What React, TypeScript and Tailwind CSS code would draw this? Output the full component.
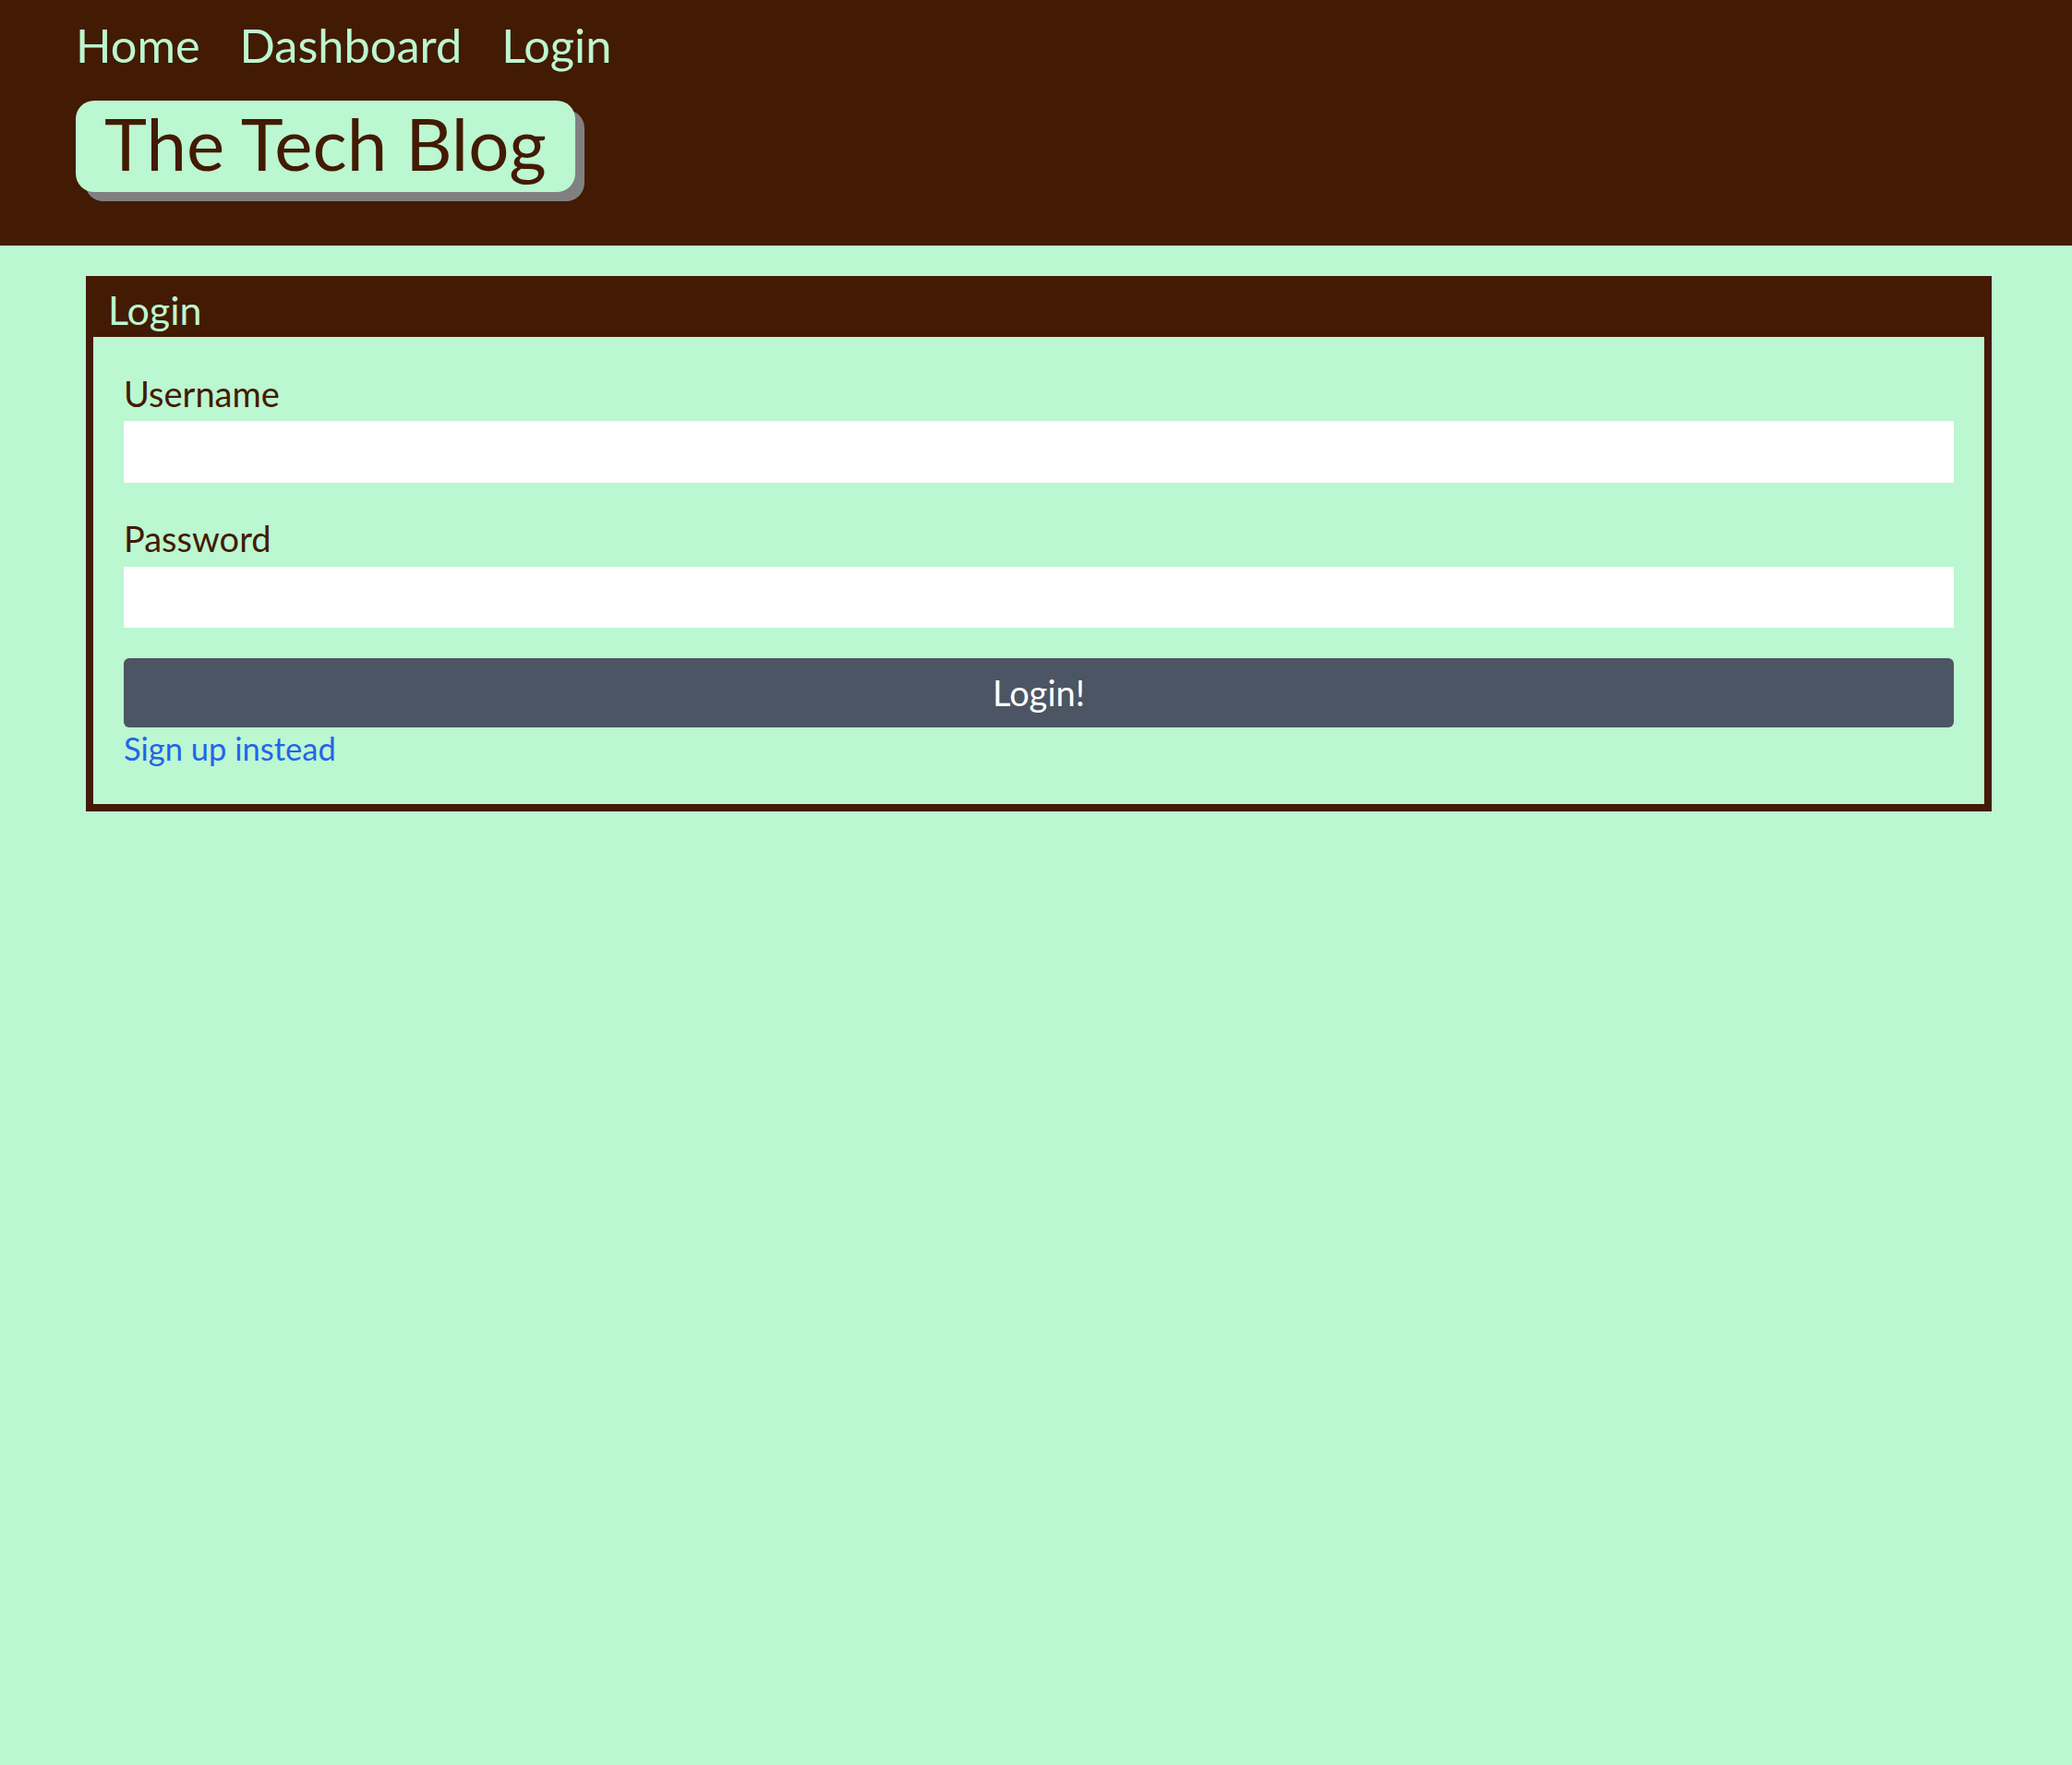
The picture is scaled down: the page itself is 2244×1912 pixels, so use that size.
const font = "font-['Lato','Noto_Sans',sans-serif]";

export default function App() {
  return (
    <div className={`min-h-screen bg-[#bbf7d0] pb-10 ${font}`}>
      <header className="h-[266px] bg-[#431a03] pl-[82px] pt-[24px]">
        <nav className="flex gap-[43px] text-[50.5px] leading-none text-[#bbf7d0]">
          <a href="#">Home</a>
          <a href="#">Dashboard</a>
          <a href="#">Login</a>
        </nav>
        <div className="mt-[34px] inline-block rounded-[20px] bg-[#bbf7d0] px-[31px] pb-[6px] shadow-[10px_10px_0_#808080]">
          <h1 className="text-[78px] leading-[93px] text-[#431a03]">The Tech Blog</h1>
        </div>
      </header>

      <main className="mt-[33px] ml-[93px] w-[2064px] border-8 border-[#431a03]">
        <div className="h-[58px] bg-[#431a03] pl-[16px] text-[43px] leading-[58px] text-[#bbf7d0]">
          Login
        </div>
        <form className="flex flex-col px-[33px] pt-[38px] pb-[39px] text-[#431a03]">
          <label className="mb-[7px] text-[38px] leading-[46px]">Username</label>
          <input type="text" className="h-[67px] bg-white outline-none" />
          <label className="mt-[37px] mb-[8px] text-[38px] leading-[46px]">Password</label>
          <input type="password" className="h-[66px] bg-white outline-none" />
          <button
            type="button"
            className="mt-[33px] h-[75px] rounded-md bg-[#4b5563] text-[38px] text-white"
          >
            Login!
          </button>
          <a href="#" className="mt-[2px] self-start text-[34.5px] leading-[42px] text-[#2563eb]">
            Sign up instead
          </a>
        </form>
      </main>
    </div>
  );
}
